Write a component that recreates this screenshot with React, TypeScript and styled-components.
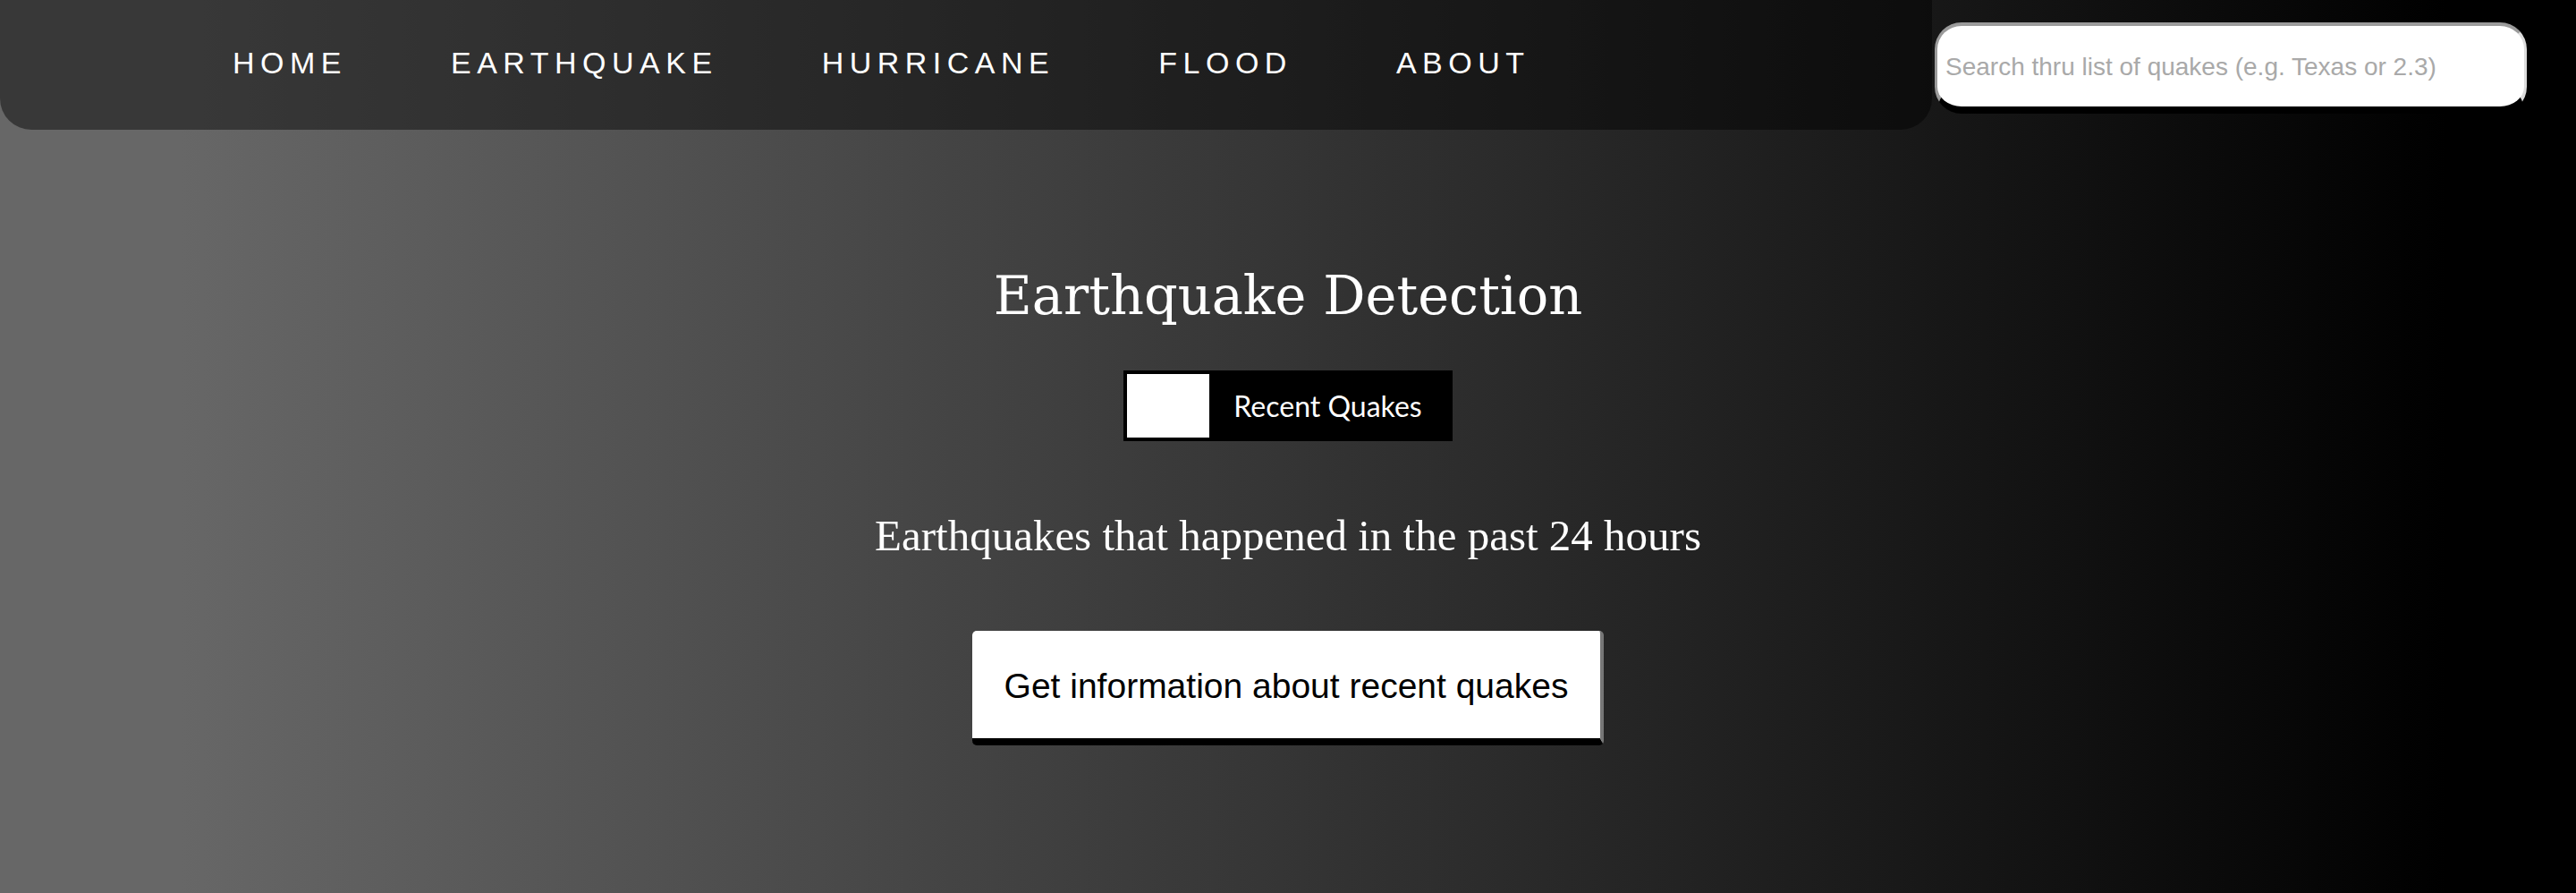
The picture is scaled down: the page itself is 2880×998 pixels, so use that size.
import styled, { createGlobalStyle } from 'styled-components';

const GlobalStyle = createGlobalStyle`
  html, body {
    margin: 0;
    padding: 0;
  }
  body {
    min-height: 998px;
    background: linear-gradient(90deg, #676767 7%, #000000 95%);
    font-family: 'Liberation Sans', Arial, sans-serif;
  }
`;

const NAV_LINKS = ['HOME', 'EARTHQUAKE', 'HURRICANE', 'FLOOD', 'ABOUT'];

export default function App() {
  return (
    <>
      <GlobalStyle />
      <Header>
        <NavBar>
          {NAV_LINKS.map(link => (
            <NavLink key={link} href="#">
              {link}
            </NavLink>
          ))}
        </NavBar>
        <SearchInput type="text" placeholder="Search thru list of quakes (e.g. Texas or 2.3)" />
      </Header>
      <Main>
        <Title>Earthquake Detection</Title>
        <ToggleBox>
          <ToggleSquare />
          <ToggleLabel>Recent Quakes</ToggleLabel>
        </ToggleBox>
        <Subtitle>Earthquakes that happened in the past 24 hours</Subtitle>
        <InfoButton>Get information about recent quakes</InfoButton>
      </Main>
    </>
  );
}

const Header = styled.header`
  display: flex;
  align-items: flex-start;
`;

const NavBar = styled.nav`
  width: 2160px;
  height: 145px;
  flex-shrink: 0;
  display: flex;
  align-items: center;
  gap: 116px;
  padding: 0 0 4px 260px;
  box-sizing: border-box;
  background: rgba(0, 0, 0, 0.45);
  border-radius: 0 0 35px 35px;
`;

const NavLink = styled.a`
  color: #ffffff;
  text-decoration: none;
  font-family: 'Liberation Sans', Arial, sans-serif;
  font-size: 34px;
  letter-spacing: 6.5px;
`;

const SearchInput = styled.input`
  margin: 25px 0 0 3px;
  width: 662px;
  height: 102px;
  box-sizing: border-box;
  padding: 2px 0 0 9px;
  background: #ffffff;
  border-style: solid;
  border-width: 4px 3px 8px 3px;
  border-color: #9b9b9b #dcdcdc #000000 #9b9b9b;
  border-radius: 30px;
  font-family: 'Liberation Sans', Arial, sans-serif;
  font-size: 28px;
  outline: none;

  &::placeholder {
    color: #a9a9a9;
  }
`;

const Main = styled.main`
  display: flex;
  flex-direction: column;
  align-items: center;
`;

const Title = styled.h1`
  margin: 156px 0 0;
  font-family: 'DejaVu Serif', Georgia, serif;
  font-weight: 400;
  font-size: 59px;
  line-height: 1;
  color: #ffffff;
`;

const ToggleBox = styled.div`
  margin-top: 54px;
  display: flex;
  align-items: center;
  gap: 27px;
  padding: 4px 34px 4px 4px;
  background: #000000;
`;

const ToggleSquare = styled.span`
  width: 92px;
  height: 71px;
  background: #ffffff;
`;

const ToggleLabel = styled.span`
  font-family: Lato, 'Noto Sans', sans-serif;
  font-size: 32px;
  color: #ffffff;
`;

const Subtitle = styled.h2`
  margin: 81px 0 0;
  font-family: 'Liberation Serif', 'Times New Roman', serif;
  font-weight: 400;
  font-size: 49px;
  line-height: 1;
  color: #ffffff;
`;

const InfoButton = styled.button`
  margin-top: 82px;
  width: 706px;
  height: 128px;
  box-sizing: border-box;
  padding-top: 4px;
  background: #ffffff;
  color: #000000;
  border-style: solid;
  border-width: 0 4px 8px 0;
  border-color: #777777 #777777 #000000 #777777;
  border-radius: 5px;
  font-family: 'Liberation Sans', Arial, sans-serif;
  font-size: 39px;
  cursor: pointer;
`;
